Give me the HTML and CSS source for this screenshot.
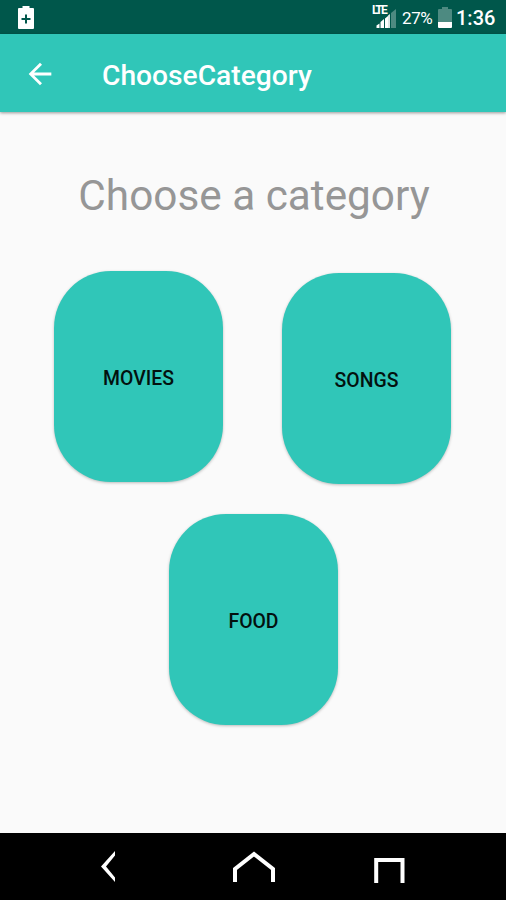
FILE: index.html
```html
<!DOCTYPE html>
<html lang="en">
<head>
    <meta charset="UTF-8">
    <meta name="viewport" content="width=device-width, initial-scale=1.0">
    <title>ChooseCategory</title>
    <link rel="stylesheet" href="styles.css">
</head>
<body>
    <div class="status-bar">
        <svg class="charge-icon" width="16" height="23" viewBox="0 0 16 23">
            <path fill="#fff" d="M4.500 0h7v2H15q1 0 1 1v19q0 1-1 1H1q-1 0-1-1V3q0-1 1-1h3.500z"/>
            <path stroke="#00574b" stroke-width="2" d="M8 8.500v9M3.500 13h9"/>
        </svg>
        <div class="status-right">
            <div class="signal">
                <span class="network">LTE</span>
                <svg width="20" height="19" viewBox="0 0 20 19">
                    <path fill="#fff" d="M0.500 19v-2.500l3-2V19zM4.500 19v-6l3.500-3V19zM9 19v-9.500l3-2.500V19z"/>
                    <path fill="#dce8e6" d="M12 19V6.500L14 5v14z"/>
                    <path fill="#4d8a81" d="M15 19V4l5-4v19z"/>
                </svg>
            </div>
            <span class="percent">27%</span>
            <svg class="battery-icon" width="14" height="21" viewBox="0 0 14 21">
                <path fill="#4d8a81" d="M4 0h6v2h3q1 0 1 1v12H0V3q0-1 1-1h3z"/>
                <path fill="#fff" d="M0 15h14v5q0 1-1 1H1q-1 0-1-1z"/>
            </svg>
            <span class="clock">1:36</span>
        </div>
    </div>

    <header class="app-bar">
        <a class="back" href="#" aria-label="Back">
            <svg width="34" height="34" viewBox="0 0 24 24" fill="#fff">
                <path d="M20 11H7.830l5.590-5.590L12 4l-8 8 8 8 1.410-1.410L7.830 13H20v-2z"/>
            </svg>
        </a>
        <h1>ChooseCategory</h1>
    </header>

    <main class="content">
        <h2>Choose a category</h2>
        <div class="categories">
            <button class="category">MOVIES</button>
            <button class="category songs">SONGS</button>
            <button class="category food">FOOD</button>
        </div>
    </main>

    <nav class="nav-bar">
        <svg width="32" height="32" viewBox="0 0 32 32" fill="#fff">
            <path d="M14 0v4.500L5 15.500l9 11V31L0 15.500z"/>
        </svg>
        <svg width="42" height="32" viewBox="0 0 42 32" fill="none" stroke="#fff" stroke-width="4">
            <path d="M2 31V18L21 3l19 15v13"/>
        </svg>
        <svg width="31" height="25" viewBox="0 0 31 25" fill="none" stroke="#fff" stroke-width="4">
            <path d="M2.200 25V2h26.300v23"/>
        </svg>
    </nav>
</body>
</html>
```
FILE: styles.css
```css
* {
    margin: 0;
    padding: 0;
    box-sizing: border-box;
    font-family: Roboto, sans-serif;
}

body {
    height: 900px;
    display: flex;
    flex-direction: column;
    background-color: #fafafa;
    overflow: hidden;
}

.status-bar {
    height: 34px;
    display: flex;
    align-items: flex-start;
    justify-content: space-between;
    padding: 0 11px 0 18px;
    background-color: #00574b;
    color: white;
}

.charge-icon {
    margin-top: 6px;
}

.status-right {
    display: flex;
    align-items: flex-start;
}

.signal {
    position: relative;
    margin-top: 9px;
    height: 19px;
}

.signal svg {
    display: block;
}

.network {
    position: absolute;
    left: -4px;
    top: -5px;
    font-size: 12px;
    line-height: 12px;
    font-weight: 700;
    letter-spacing: -1.8px;
}

.percent {
    margin-left: 6px;
    width: 32px;
    font-size: 17px;
    line-height: 36px;
    letter-spacing: -0.4px;
}

.battery-icon {
    margin: 7px 0 0 4px;
}

.clock {
    margin-left: 4px;
    width: 39px;
    font-size: 20px;
    line-height: 37px;
    font-weight: 500;
    white-space: nowrap;
}

.app-bar {
    height: 78px;
    display: flex;
    align-items: center;
    padding-left: 23px;
    background-color: #30c6b8;
    box-shadow: 0 1px 3px rgba(0, 0, 0, 0.4);
}

.back {
    height: 33px;
}

.app-bar h1 {
    margin: 4px 0 0 45px;
    color: white;
    font-size: 28.2px;
    font-weight: 500;
}

.content {
    flex: 1;
}

.content h2 {
    margin-top: 59px;
    height: 50px;
    line-height: 50px;
    text-align: center;
    padding-left: 2px;
    color: #969696;
    font-size: 42.3px;
    font-weight: 400;
}

.categories {
    display: grid;
    grid-template-columns: 169px 169px;
    column-gap: 59px;
    row-gap: 30px;
    justify-content: center;
    margin-top: 50px;
    padding-right: 2px;
}

.category {
    width: 169px;
    height: 211px;
    padding: 3px 0 0 1px;
    border: none;
    border-radius: 57px;
    background-color: #30c6b8;
    color: #03110f;
    font-size: 19.4px;
    font-weight: 500;
    box-shadow: 0 1px 3px rgba(0, 0, 0, 0.25);
    cursor: pointer;
}

.songs {
    margin-top: 2px;
}

.food {
    grid-column: 1 / 3;
    justify-self: center;
    margin-left: 2px;
}

.nav-bar {
    height: 67px;
    display: flex;
    align-items: flex-end;
    justify-content: space-between;
    padding: 0 101px 17px 101px;
    background-color: black;
}
```
